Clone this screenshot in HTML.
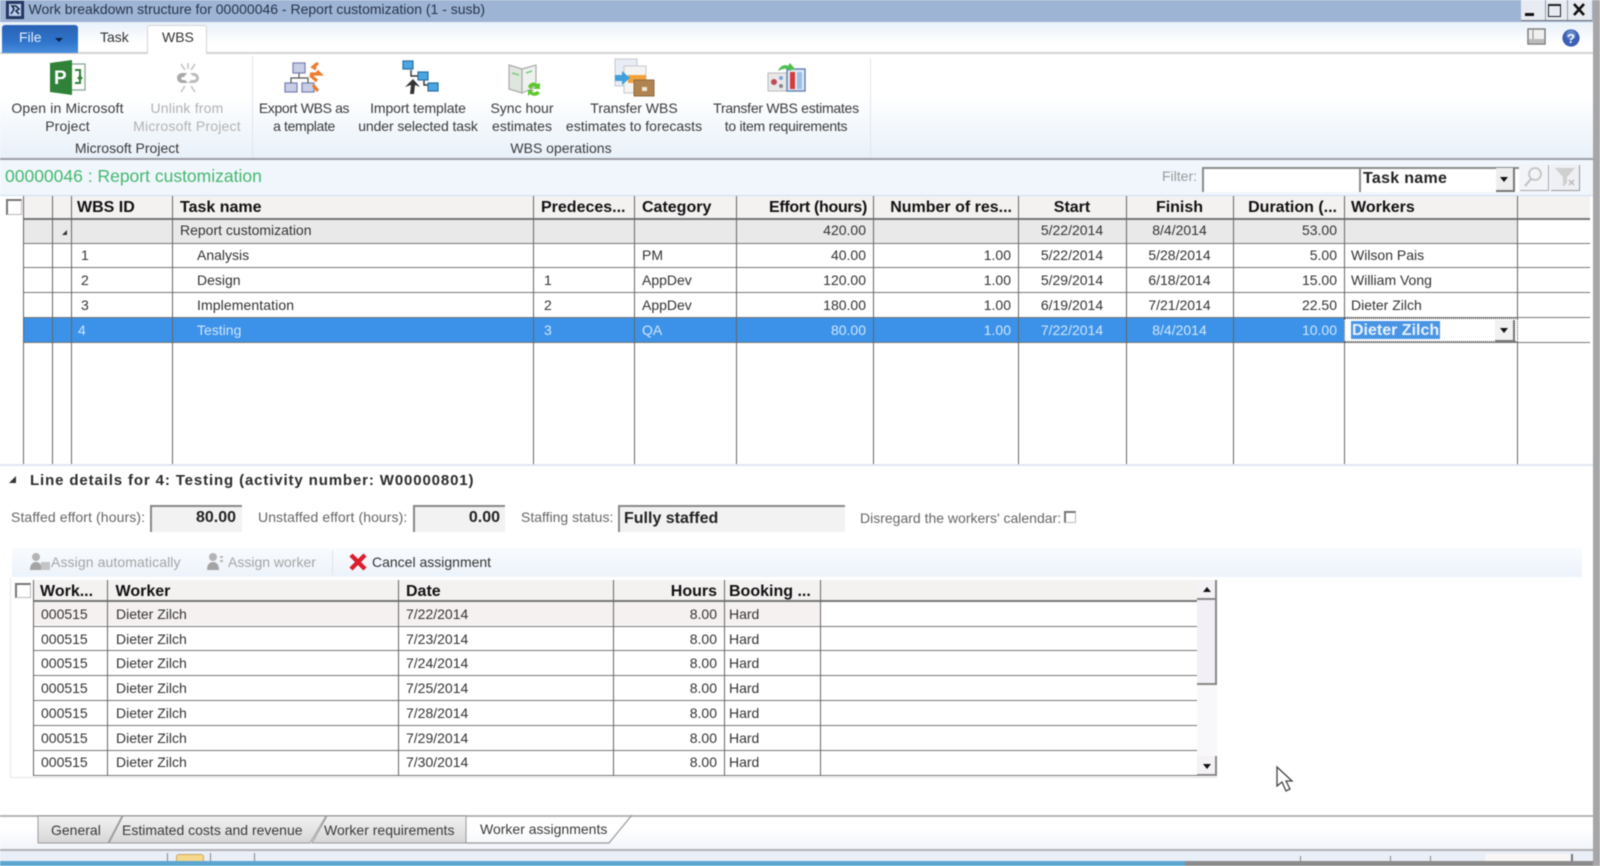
<!DOCTYPE html>
<html><head><meta charset="utf-8"><title>Work breakdown structure</title>
<style>
html,body{margin:0;padding:0;width:1600px;height:866px;overflow:hidden;background:#fff}
#r{position:absolute;left:0;top:0;width:1600px;height:866px;overflow:hidden;background:#fff;font-family:"Liberation Sans",sans-serif;font-size:14px;color:#333;filter:blur(.45px)}
.b{position:absolute}
.t{position:absolute;white-space:nowrap;line-height:20px}
.h{font-weight:bold;font-size:16px;color:#111}
.r{text-align:right}.c{text-align:center}
.d{color:#a8a8a8}
.v{position:absolute;width:1px;background:#666}
.l{position:absolute;height:1px;background:#777}
.w{color:#cfe6fb}
.rb{text-align:center;color:#3a3a3a;line-height:17.5px}
svg{position:absolute;overflow:visible}
</style></head><body><div id="r">

<!-- title bar -->
<div class="b" style="left:0;top:0;width:1600px;height:22px;background:#9db4d4"></div>
<svg style="left:6px;top:1px" width="18" height="18" viewBox="0 0 18 18"><rect x=".5" y=".5" width="17" height="17" fill="#2a3f6e" stroke="#1c2a4c"/><path d="M3 3h12v12H3z" fill="#bcd0ea"/><path d="M5 13l3-5-2-3h4l3 3-3 2 3 3" fill="none" stroke="#1c2a4c" stroke-width="1.6"/></svg>
<div class="t" style="left:28.5px;top:-1px;color:#26344c">Work breakdown structure for 00000046 - Report customization (1 - susb)</div>
<div class="b" style="left:1521px;top:0;width:71px;height:20px;background:#e8ecf2;border-bottom:1px solid #777"></div>
<div class="b" style="left:1545px;top:0;width:1px;height:20px;background:#8c9cb4"></div>
<div class="b" style="left:1567px;top:0;width:1px;height:20px;background:#8c9cb4"></div>
<div class="b" style="left:1525px;top:13px;width:9px;height:3px;background:#111"></div>
<div class="b" style="left:1548px;top:4px;width:11px;height:10px;border:1.5px solid #222;border-top-width:2px"></div>
<svg style="left:1572px;top:3px" width="14" height="13" viewBox="0 0 14 13"><path d="M2 1l10 11M12 1L2 12" stroke="#111" stroke-width="2.6"/></svg>

<!-- tab row -->
<div class="b" style="left:0;top:22px;width:1593px;height:31px;background:linear-gradient(#e9f1fa,#fff 70%)"></div>
<div class="b" style="left:0;top:52px;width:1593px;height:2px;background:#d4d4d6"></div>
<div class="b" style="left:2px;top:25px;width:76px;height:28px;border-radius:3px 3px 0 0;background:linear-gradient(#2a62b4,#2f74cc 60%,#4a8fdc)"></div>
<div class="t" style="left:19px;top:27px;color:#e4eefa">File</div>
<div class="b" style="left:55px;top:38px;width:0;height:0;border-left:4px solid transparent;border-right:4px solid transparent;border-top:4px solid #0b1f44"></div>
<div class="t" style="left:100px;top:27px;color:#333">Task</div>
<div class="b" style="left:147px;top:25px;width:58px;height:30px;background:#fff;border:1px solid #d4d4d6;border-bottom:none;border-radius:3px 3px 0 0"></div>
<div class="t" style="left:162px;top:27px;color:#333">WBS</div>
<svg style="left:1527px;top:28px" width="20" height="18" viewBox="0 0 20 18"><rect x="1" y="1" width="17" height="15" fill="#f0f0f0" stroke="#777" stroke-width="1.4"/><rect x="2" y="11" width="15" height="4" fill="#bbb"/><path d="M6 2v9" stroke="#888"/></svg>
<svg style="left:1561px;top:28px" width="20" height="20" viewBox="0 0 20 20"><circle cx="10" cy="10" r="8.6" fill="#3a5fb4"/><circle cx="10" cy="7" r="5" fill="#7d9ddc" opacity=".6"/><text x="10" y="15" text-anchor="middle" font-family="Liberation Sans" font-weight="bold" font-size="13" fill="#fff">?</text></svg>

<!-- ribbon -->
<div class="b" style="left:0;top:54px;width:1593px;height:105px;background:linear-gradient(#fff 40%,#e8f0f9)"></div>
<div class="b" style="left:0;top:158px;width:1593px;height:2px;background:#9a9ea4"></div>
<div class="b" style="left:252px;top:56px;width:1px;height:102px;background:#dfe5ee"></div>
<div class="b" style="left:870px;top:58px;width:1px;height:100px;background:#dfe5ee"></div>

<!-- MS Project -->
<svg style="left:49px;top:59px" width="38" height="38" viewBox="0 0 38 38"><rect x="20" y="5" width="16" height="26" fill="#fff" stroke="#8fae9a" stroke-width="1.4"/><path d="M1 4L23 1v35L1 33z" fill="#2f8238"/><text x="5" y="25" font-family="Liberation Sans" font-weight="bold" font-size="19" fill="#fff">P</text><path d="M26 11h5v6M26 24h5v-6M29 20l2-3 2 3" fill="none" stroke="#2f8238" stroke-width="2"/></svg>
<svg style="left:173px;top:62px" width="30" height="32" viewBox="0 0 30 32"><path d="M4 16a5 5 0 015-5h5l-3 4H9a2 2 0 000 3h3l3 3H9a5 5 0 01-5-5z" fill="#a9a9a9"/><path d="M26 16a5 5 0 00-5-5h-4l3 3h1a2 2 0 010 4h-3l-3 3h6a5 5 0 005-5z" fill="#bcbcbc"/><path d="M8 2l4 6M22 2l-4 6M15 1v6M8 30l4-6M22 30l-4-6" stroke="#c8c8c8" stroke-width="1.6"/></svg>
<!-- Export -->
<svg style="left:284px;top:61px" width="40" height="34" viewBox="0 0 40 34"><g fill="#c8cde6" stroke="#7f86b4" stroke-width="1.3"><rect x="9" y="2" width="12" height="10"/><rect x="1" y="22" width="12" height="9"/><rect x="18" y="22" width="12" height="9"/></g><path d="M15 12v5M7 22v-5h17v5" fill="none" stroke="#555" stroke-width="1.2"/><path d="M34 2l-5 4 3 2M26 13h10l-3-3M26 14l7 6M29 24l5 6" fill="none" stroke="#ee7c2e" stroke-width="3.2"/></svg>
<!-- Import -->
<svg style="left:402px;top:60px" width="38" height="36" viewBox="0 0 38 36"><path d="M9 10v6h8M22 17v8h6" fill="none" stroke="#333" stroke-width="1.4"/><g fill="#4aa7e6" stroke="#2c6f9e" stroke-width="1.2"><rect x="1" y="1" width="10" height="8"/><rect x="16" y="12" width="10" height="8"/><rect x="26" y="23" width="10" height="8"/></g><path d="M8 34l1-9-6 2 8-8 7 8-5-2-1 9z" fill="#333"/></svg>
<!-- Sync -->
<svg style="left:507px;top:61px" width="36" height="36" viewBox="0 0 36 36"><path d="M2 4l13 4v24L2 28z" fill="#dfe6df" stroke="#aaa" stroke-width="1.2"/><path d="M15 8l14-4v22l-14 6z" fill="#eef2ee" stroke="#aaa" stroke-width="1.2"/><path d="M5 12l7 2M19 12l6-2" stroke="#7fca80" stroke-width="1.6"/><path d="M21 26c1-4 6-6 9-3l3-1v6h-6l2-2c-2-1-4 0-5 2zM33 32c-2 3-7 4-10 1l-2 2v-6h6l-2 2c2 1 4 0 5-1z" fill="#5ec72e"/></svg>
<!-- Transfer forecasts -->
<svg style="left:614px;top:58px" width="42" height="40" viewBox="0 0 42 40"><rect x="1" y="1" width="22" height="27" fill="#e8ecf4" stroke="#c4c8d0"/><rect x="10" y="8" width="22" height="27" fill="#f6f4f2" stroke="#c4c8d0"/><rect x="14" y="17" width="18" height="8" fill="#f2a23c"/><path d="M1 17h7v-4l8 7-8 7v-4H1z" fill="#3fa0dc"/><rect x="20" y="22" width="20" height="16" fill="#b08450" stroke="#8f6a3e"/><rect x="28" y="29" width="5" height="4" fill="#f2e6d2"/></svg>
<!-- Transfer requirements -->
<svg style="left:767px;top:62px" width="40" height="32" viewBox="0 0 40 32"><rect x="1" y="11" width="20" height="18" fill="#e8e8e8" stroke="#bbb"/><rect x="20" y="7" width="18" height="22" fill="#dfe8f4" stroke="#5c7fb0" stroke-width="1.4"/><rect x="23" y="10" width="5" height="17" fill="#d63a3a"/><rect x="30" y="10" width="5" height="17" fill="#9cc0e4"/><path d="M11 9c2-6 8-7 10-5l2-3 5 6-7 2 1-2c-3-1-7 0-11 2z" fill="#4cc04c"/><circle cx="7" cy="20" r="3" fill="#c04a5a"/><circle cx="14" cy="16" r="2" fill="#7aa8d8"/><circle cx="14" cy="24" r="2" fill="#888"/></svg>

<div class="t rb" style="left:0;top:100px;width:135px;letter-spacing:.15px">Open in Microsoft<br>Project</div>
<div class="t rb d" style="left:122px;top:100px;width:130px;color:#b2b2b2;letter-spacing:.2px">Unlink from<br>Microsoft Project</div>
<div class="t rb" style="left:254px;top:100px;width:100px;letter-spacing:-.35px">Export WBS as<br>a template</div>
<div class="t rb" style="left:350px;top:100px;width:136px;letter-spacing:-.1px">Import template<br>under selected task</div>
<div class="t rb" style="left:480px;top:100px;width:84px">Sync hour<br>estimates</div>
<div class="t rb" style="left:560px;top:100px;width:148px">Transfer WBS<br>estimates to forecasts</div>
<div class="t rb" style="left:706px;top:100px;width:160px;letter-spacing:-.25px">Transfer WBS estimates<br>to item requirements</div>
<div class="t c" style="left:50px;top:138px;width:154px;color:#3a3a3a">Microsoft Project</div>
<div class="t c" style="left:490px;top:138px;width:142px;color:#3a3a3a">WBS operations</div>

<!-- filter row -->
<div class="b" style="left:0;top:160px;width:1593px;height:36px;background:#f0f6fc"></div>
<div class="b" style="left:0;top:195px;width:1593px;height:1px;background:#d0e0f2"></div>
<div class="t" style="left:5px;top:166px;font-size:17.5px;line-height:20px;color:#45b86e">00000046 : Report customization</div>
<div class="t" style="left:1162px;top:166px;color:#9a9a9a">Filter:</div>
<div class="b" style="left:1202px;top:167px;width:155px;height:23px;background:#fff;border-top:2px solid #8b8b8b;border-left:2px solid #8b8b8b"></div>
<div class="b" style="left:1359px;top:167px;width:158px;height:23px;background:#fff;border-top:2px solid #8b8b8b;border-left:2px solid #8b8b8b"></div>
<div class="t" style="left:1363px;top:168px;font-size:16px;font-weight:bold;color:#222;letter-spacing:.3px;line-height:22px">Task name</div>
<div class="b" style="left:1496px;top:168px;width:17px;height:22px;background:#eee;border-right:2px solid #777;border-bottom:2px solid #777"></div>
<div class="b" style="left:1500px;top:177px;width:0;height:0;border-left:4px solid transparent;border-right:4px solid transparent;border-top:5px solid #111"></div>
<div class="b" style="left:1520px;top:165px;width:28px;height:25px;background:#f2f4f8;border-right:1px solid #aaa;border-bottom:1px solid #aaa"></div>
<svg style="left:1521px;top:166px" width="24" height="22" viewBox="0 0 24 22"><circle cx="14" cy="8" r="6" fill="none" stroke="#c4c4c4" stroke-width="1.8"/><path d="M10 13l-6 7" stroke="#c4c4c4" stroke-width="2.2"/></svg>
<div class="b" style="left:1551px;top:165px;width:28px;height:25px;background:#eef0f4;border-right:1px solid #999;border-bottom:1px solid #999"></div>
<svg style="left:1553px;top:167px" width="24" height="22" viewBox="0 0 24 22"><path d="M2 1h20l-8 9v6l-4 4V10z" fill="#cfcfcf"/><path d="M16 13l5 5M21 13l-5 5" stroke="#bbb" stroke-width="1.5"/></svg>

<!-- main grid -->
<div class="b" style="left:0;top:196px;width:1590px;height:268px;background:#fff"></div>
<div class="b" style="left:24px;top:196px;width:1566px;height:23px;background:#f4f1f1"></div>
<div class="b" style="left:24px;top:220px;width:1493px;height:23px;background:#e9e9e9"></div>
<div class="b" style="left:24px;top:318px;width:1320px;height:24px;background:#3c92e8"></div>
<div class="b" style="left:6px;top:199px;width:13px;height:13px;background:#fff;border-top:2px solid #777;border-left:2px solid #777;border-right:1px solid #bbb;border-bottom:1px solid #bbb"></div>
<div class="l" style="left:24px;top:218px;width:1566px;height:2px;background:#777"></div>
<div class="l" style="left:24px;top:243px;width:1566px"></div>
<div class="l" style="left:24px;top:267px;width:1566px"></div>
<div class="l" style="left:24px;top:292px;width:1566px"></div>
<div class="l" style="left:24px;top:317px;width:1566px"></div>
<div class="l" style="left:24px;top:342px;width:1566px"></div>
<div class="b" style="left:0;top:464px;width:1593px;height:2px;background:#dfe6f2"></div>
<div class="v" style="left:23px;top:196px;height:268px"></div>
<div class="v" style="left:52px;top:196px;height:268px"></div>
<div class="v" style="left:71px;top:196px;height:268px"></div>
<div class="v" style="left:172px;top:196px;height:268px"></div>
<div class="v" style="left:533px;top:196px;height:268px"></div>
<div class="v" style="left:634px;top:196px;height:268px"></div>
<div class="v" style="left:736px;top:196px;height:268px"></div>
<div class="v" style="left:873px;top:196px;height:268px"></div>
<div class="v" style="left:1018px;top:196px;height:268px"></div>
<div class="v" style="left:1126px;top:196px;height:268px"></div>
<div class="v" style="left:1233px;top:196px;height:268px"></div>
<div class="v" style="left:1344px;top:196px;height:268px"></div>
<div class="v" style="left:1517px;top:196px;height:268px"></div>

<div class="t h" style="left:77px;top:198px">WBS ID</div>
<div class="t h" style="left:180px;top:198px">Task name</div>
<div class="t h" style="left:541px;top:198px">Predeces...</div>
<div class="t h" style="left:642px;top:198px">Category</div>
<div class="t h r" style="left:738px;top:198px;width:129px;letter-spacing:-.3px">Effort (hours)</div>
<div class="t h r" style="left:875px;top:198px;width:137px">Number of res...</div>
<div class="t h c" style="left:1019px;top:198px;width:106px">Start</div>
<div class="t h c" style="left:1127px;top:198px;width:105px">Finish</div>
<div class="t h r" style="left:1234px;top:198px;width:103px">Duration (...</div>
<div class="t h" style="left:1351px;top:198px">Workers</div>

<!-- row 0 -->
<div class="b" style="left:62px;top:230px;width:0;height:0;border-left:5px solid transparent;border-bottom:5px solid #333"></div>
<div class="t" style="left:180px;top:220px">Report customization</div>
<div class="t r" style="left:738px;top:220px;width:128px">420.00</div>
<div class="t c" style="left:1019px;top:220px;width:106px">5/22/2014</div>
<div class="t c" style="left:1127px;top:220px;width:105px">8/4/2014</div>
<div class="t r" style="left:1234px;top:220px;width:103px">53.00</div>
<!-- row 1 -->
<div class="t" style="left:81px;top:245px">1</div><div class="t" style="left:197px;top:245px">Analysis</div><div class="t" style="left:642px;top:245px">PM</div>
<div class="t r" style="left:738px;top:245px;width:128px">40.00</div><div class="t r" style="left:875px;top:245px;width:136px">1.00</div>
<div class="t c" style="left:1019px;top:245px;width:106px">5/22/2014</div><div class="t c" style="left:1127px;top:245px;width:105px">5/28/2014</div>
<div class="t r" style="left:1234px;top:245px;width:103px">5.00</div><div class="t" style="left:1351px;top:245px">Wilson Pais</div>
<!-- row 2 -->
<div class="t" style="left:81px;top:270px">2</div><div class="t" style="left:197px;top:270px">Design</div><div class="t" style="left:544px;top:270px">1</div><div class="t" style="left:642px;top:270px">AppDev</div>
<div class="t r" style="left:738px;top:270px;width:128px">120.00</div><div class="t r" style="left:875px;top:270px;width:136px">1.00</div>
<div class="t c" style="left:1019px;top:270px;width:106px">5/29/2014</div><div class="t c" style="left:1127px;top:270px;width:105px">6/18/2014</div>
<div class="t r" style="left:1234px;top:270px;width:103px">15.00</div><div class="t" style="left:1351px;top:270px">William Vong</div>
<!-- row 3 -->
<div class="t" style="left:81px;top:295px">3</div><div class="t" style="left:197px;top:295px;letter-spacing:.1px">Implementation</div><div class="t" style="left:544px;top:295px">2</div><div class="t" style="left:642px;top:295px">AppDev</div>
<div class="t r" style="left:738px;top:295px;width:128px">180.00</div><div class="t r" style="left:875px;top:295px;width:136px">1.00</div>
<div class="t c" style="left:1019px;top:295px;width:106px">6/19/2014</div><div class="t c" style="left:1127px;top:295px;width:105px">7/21/2014</div>
<div class="t r" style="left:1234px;top:295px;width:103px">22.50</div><div class="t" style="left:1351px;top:295px">Dieter Zilch</div>
<!-- row 4 -->
<div class="t w" style="left:78px;top:320px">4</div><div class="t w" style="left:197px;top:320px">Testing</div><div class="t w" style="left:544px;top:320px">3</div><div class="t w" style="left:642px;top:320px">QA</div>
<div class="t r w" style="left:738px;top:320px;width:128px">80.00</div><div class="t r w" style="left:875px;top:320px;width:136px">1.00</div>
<div class="t c w" style="left:1019px;top:320px;width:106px">7/22/2014</div><div class="t c w" style="left:1127px;top:320px;width:105px">8/4/2014</div>
<div class="t r w" style="left:1234px;top:320px;width:103px">10.00</div>
<div class="b" style="left:1344px;top:318px;width:172px;height:22px;background:#fff;border:1px dotted #444"></div>
<div class="b" style="left:1351px;top:321px;width:89px;height:18px;background:#4a94e4"></div>
<div class="t" style="left:1352px;top:321px;font-size:16px;font-weight:bold;color:#e6f2ff">Dieter Zilch</div>
<div class="b" style="left:1495px;top:320px;width:18px;height:20px;background:#f2f2f2;border-right:2px solid #777;border-bottom:2px solid #777"></div>
<div class="b" style="left:1500px;top:328px;width:0;height:0;border-left:4px solid transparent;border-right:4px solid transparent;border-top:5px solid #111"></div>

<!-- line details -->
<div class="b" style="left:9px;top:476px;width:0;height:0;border-left:7px solid transparent;border-bottom:7px solid #333"></div>
<div class="t" style="left:30px;top:471px;font-size:15px;font-weight:bold;letter-spacing:.87px;color:#2c2c2c">Line details for 4: Testing (activity number: W00000801)</div>
<div class="t" style="left:11px;top:507px;color:#666;letter-spacing:.1px">Staffed effort (hours):</div>
<div class="b" style="left:150px;top:505px;width:92px;height:27px;background:#f3f2f2;border-top:2px solid #888;border-left:2px solid #888;box-sizing:border-box"></div>
<div class="t r" style="left:150px;top:508px;width:86px;font-size:16px;font-weight:bold;color:#222">80.00</div>
<div class="t" style="left:258px;top:507px;color:#666;letter-spacing:.08px">Unstaffed effort (hours):</div>
<div class="b" style="left:413px;top:505px;width:92px;height:27px;background:#f3f2f2;border-top:2px solid #888;border-left:2px solid #888;box-sizing:border-box"></div>
<div class="t r" style="left:413px;top:508px;width:87px;font-size:16px;font-weight:bold;color:#222">0.00</div>
<div class="t" style="left:521px;top:507px;color:#666">Staffing status:</div>
<div class="b" style="left:618px;top:505px;width:227px;height:27px;background:#f3f2f2;border-top:2px solid #888;border-left:2px solid #888;box-sizing:border-box"></div>
<div class="t" style="left:624px;top:509px;font-size:16px;font-weight:bold;color:#222">Fully staffed</div>
<div class="t" style="left:860px;top:508px;color:#666">Disregard the workers' calendar:</div>
<div class="b" style="left:1064px;top:511px;width:12px;height:12px;background:#fff;border-top:2px solid #777;border-left:2px solid #777;border-right:1px solid #bbb;border-bottom:1px solid #bbb;box-sizing:border-box"></div>

<!-- toolbar -->
<div class="b" style="left:12px;top:548px;width:1570px;height:29px;background:linear-gradient(#f9fbfe,#edf3fb)"></div>
<div class="b" style="left:332px;top:550px;width:1px;height:25px;background:#dde3ec"></div>
<svg style="left:29px;top:552px" width="22" height="20" viewBox="0 0 22 20"><circle cx="7" cy="5" r="4" fill="#b4b4b4"/><path d="M1 18c0-6 3-8 6-8s6 2 6 8z" fill="#a4a4a4"/><rect x="12" y="10" width="9" height="8" fill="#c4c4c4"/></svg>
<div class="t d" style="left:51px;top:552px;color:#a4a4a4;letter-spacing:.1px">Assign automatically</div>
<svg style="left:205px;top:552px" width="20" height="20" viewBox="0 0 20 20"><circle cx="8" cy="5" r="4" fill="#b4b4b4"/><path d="M2 18c0-6 3-8 6-8s6 2 6 8z" fill="#a4a4a4"/><path d="M15 5h3M15 9h3" stroke="#b4b4b4" stroke-width="2"/></svg>
<div class="t d" style="left:228px;top:552px;color:#a4a4a4">Assign worker</div>
<svg style="left:349px;top:553px" width="18" height="18" viewBox="0 0 18 18"><path d="M2 2l14 14M16 2L2 16" stroke="#dd1c2c" stroke-width="4.4"/></svg>
<div class="t" style="left:372px;top:552px;color:#333">Cancel assignment</div>

<!-- assignment grid -->
<div class="b" style="left:10px;top:578px;width:1207px;height:200px;background:#fff;border-bottom:1px solid #e0e4ea;border-left:1px solid #e4e8ee;box-sizing:border-box"></div>
<div class="b" style="left:33px;top:580px;width:1164px;height:21px;background:#f4f1f1"></div>
<div class="b" style="left:33px;top:602px;width:788px;height:23px;background:#f5f1f1"></div>
<div class="b" style="left:15px;top:583px;width:16px;height:15px;background:#fff;border-top:2px solid #777;border-left:2px solid #777;border-right:1px solid #bbb;border-bottom:1px solid #bbb;box-sizing:border-box"></div>
<div class="l" style="left:33px;top:600px;width:1164px;height:2px;background:#777"></div>
<div class="l" style="left:33px;top:626px;width:1164px"></div>
<div class="l" style="left:33px;top:650px;width:1164px"></div>
<div class="l" style="left:33px;top:675px;width:1164px"></div>
<div class="l" style="left:33px;top:700px;width:1164px"></div>
<div class="l" style="left:33px;top:725px;width:1164px"></div>
<div class="l" style="left:33px;top:750px;width:1164px"></div>
<div class="l" style="left:33px;top:775px;width:1164px"></div>
<div class="v" style="left:33px;top:580px;height:196px"></div>
<div class="v" style="left:107px;top:580px;height:196px"></div>
<div class="v" style="left:398px;top:580px;height:196px"></div>
<div class="v" style="left:613px;top:580px;height:196px"></div>
<div class="v" style="left:724px;top:580px;height:196px"></div>
<div class="v" style="left:820px;top:580px;height:196px"></div>

<div class="t h" style="left:40px;top:582px">Work...</div>
<div class="t h" style="left:115.5px;top:582px">Worker</div>
<div class="t h" style="left:406px;top:582px">Date</div>
<div class="t h r" style="left:616px;top:582px;width:101px">Hours</div>
<div class="t h" style="left:729px;top:582px">Booking ...</div>

<div class="t" style="left:41px;top:604px">000515</div><div class="t" style="left:116px;top:604px">Dieter Zilch</div><div class="t" style="left:406px;top:604px">7/22/2014</div><div class="t r" style="left:616px;top:604px;width:101px">8.00</div><div class="t" style="left:729px;top:604px">Hard</div>
<div class="t" style="left:41px;top:629px">000515</div><div class="t" style="left:116px;top:629px">Dieter Zilch</div><div class="t" style="left:406px;top:629px">7/23/2014</div><div class="t r" style="left:616px;top:629px;width:101px">8.00</div><div class="t" style="left:729px;top:629px">Hard</div>
<div class="t" style="left:41px;top:653px">000515</div><div class="t" style="left:116px;top:653px">Dieter Zilch</div><div class="t" style="left:406px;top:653px">7/24/2014</div><div class="t r" style="left:616px;top:653px;width:101px">8.00</div><div class="t" style="left:729px;top:653px">Hard</div>
<div class="t" style="left:41px;top:678px">000515</div><div class="t" style="left:116px;top:678px">Dieter Zilch</div><div class="t" style="left:406px;top:678px">7/25/2014</div><div class="t r" style="left:616px;top:678px;width:101px">8.00</div><div class="t" style="left:729px;top:678px">Hard</div>
<div class="t" style="left:41px;top:703px">000515</div><div class="t" style="left:116px;top:703px">Dieter Zilch</div><div class="t" style="left:406px;top:703px">7/28/2014</div><div class="t r" style="left:616px;top:703px;width:101px">8.00</div><div class="t" style="left:729px;top:703px">Hard</div>
<div class="t" style="left:41px;top:728px">000515</div><div class="t" style="left:116px;top:728px">Dieter Zilch</div><div class="t" style="left:406px;top:728px">7/29/2014</div><div class="t r" style="left:616px;top:728px;width:101px">8.00</div><div class="t" style="left:729px;top:728px">Hard</div>
<div class="t" style="left:41px;top:752px">000515</div><div class="t" style="left:116px;top:752px">Dieter Zilch</div><div class="t" style="left:406px;top:752px">7/30/2014</div><div class="t r" style="left:616px;top:752px;width:101px">8.00</div><div class="t" style="left:729px;top:752px">Hard</div>

<!-- scrollbar -->
<div class="b" style="left:1197px;top:580px;width:20px;height:196px;background:#f8f8fa"></div>
<div class="b" style="left:1197px;top:580px;width:20px;height:20px;background:#f4f2f4;border-right:2px solid #888;border-bottom:2px solid #888;box-sizing:border-box"></div>
<div class="b" style="left:1203px;top:587px;width:0;height:0;border-left:4px solid transparent;border-right:4px solid transparent;border-bottom:5px solid #111"></div>
<div class="b" style="left:1197px;top:600px;width:20px;height:85px;background:#f2f0f6;border-right:2px solid #888;border-bottom:2px solid #888;box-sizing:border-box"></div>
<div class="b" style="left:1197px;top:756px;width:20px;height:20px;background:#f4f2f4;border-right:2px solid #888;border-bottom:2px solid #888;box-sizing:border-box"></div>
<div class="b" style="left:1203px;top:764px;width:0;height:0;border-left:4px solid transparent;border-right:4px solid transparent;border-top:5px solid #111"></div>

<!-- cursor -->
<svg style="left:1276px;top:766px" width="18" height="28" viewBox="0 0 18 28"><path d="M1 1v19l5-4 4 9 4-2-4-8h6z" fill="#fff" stroke="#444" stroke-width="1.3"/></svg>

<!-- tabs -->
<div class="b" style="left:0;top:816px;width:1593px;height:33px;background:linear-gradient(#fff 40%,#f1f4fa)"></div>
<div class="b" style="left:0;top:815px;width:1593px;height:1.5px;background:#b4b4b6"></div>
<div class="b" style="left:0;top:849px;width:1593px;height:2px;background:#b0b2b6"></div>
<div class="b" style="left:0;top:851px;width:1593px;height:10px;background:#e9eef7"></div>
<svg style="left:0;top:814px" width="640" height="32" viewBox="0 0 640 32">
<defs><linearGradient id="tg" x1="0" y1="0" x2="0" y2="1"><stop offset="0" stop-color="#f2f2f2"/><stop offset="1" stop-color="#d6d6d6"/></linearGradient></defs>
<path d="M38 29V2h84l-14 27z" fill="url(#tg)" stroke="#9a9a9a"/>
<path d="M109 29L123 2h203l-16 27z" fill="url(#tg)" stroke="#9a9a9a"/>
<path d="M312 29L327 2h139v27z" fill="url(#tg)" stroke="#9a9a9a"/>
<path d="M466 29V2" stroke="#999" fill="none"/>
<path d="M466 29h143L632 1" stroke="#9a9a9a" fill="none" stroke-width="1.2"/>
</svg>
<div class="t" style="left:51px;top:820px;color:#3a3a3a;font-size:14px">General</div>
<div class="t" style="left:122px;top:820px;color:#3a3a3a">Estimated costs and revenue</div>
<div class="t" style="left:324px;top:820px;color:#3a3a3a">Worker requirements</div>
<div class="t" style="left:480px;top:819px;color:#3a3a3a">Worker assignments</div>

<!-- status bar details -->
<div class="b" style="left:176px;top:854px;width:28px;height:8px;background:#f6d88c;border:1px solid #c8a860;box-sizing:border-box;border-radius:3px 3px 0 0"></div>
<div class="b" style="left:167px;top:853px;width:1px;height:9px;background:#888"></div>
<div class="b" style="left:210px;top:853px;width:1px;height:9px;background:#888"></div>
<div class="b" style="left:254px;top:853px;width:1px;height:9px;background:#888"></div>
<div class="b" style="left:1300px;top:856px;width:1px;height:6px;background:#888"></div>
<div class="b" style="left:1390px;top:856px;width:1px;height:6px;background:#888"></div>
<div class="b" style="left:1430px;top:856px;width:1px;height:6px;background:#888"></div>
<div class="b" style="left:1485px;top:854px;width:85px;height:7px;background:#fbf6f6"></div>
<div class="b" style="left:1571px;top:854px;width:1.5px;height:8px;background:#777"></div>
<div class="b" style="left:0;top:861px;width:1185px;height:5px;background:#5ea6d2"></div>
<div class="b" style="left:1185px;top:861px;width:415px;height:5px;background:#8c8c8c"></div>
<div class="b" style="left:1593px;top:0;width:7px;height:866px;background:#a6a6a8"></div>
</div></body></html>
